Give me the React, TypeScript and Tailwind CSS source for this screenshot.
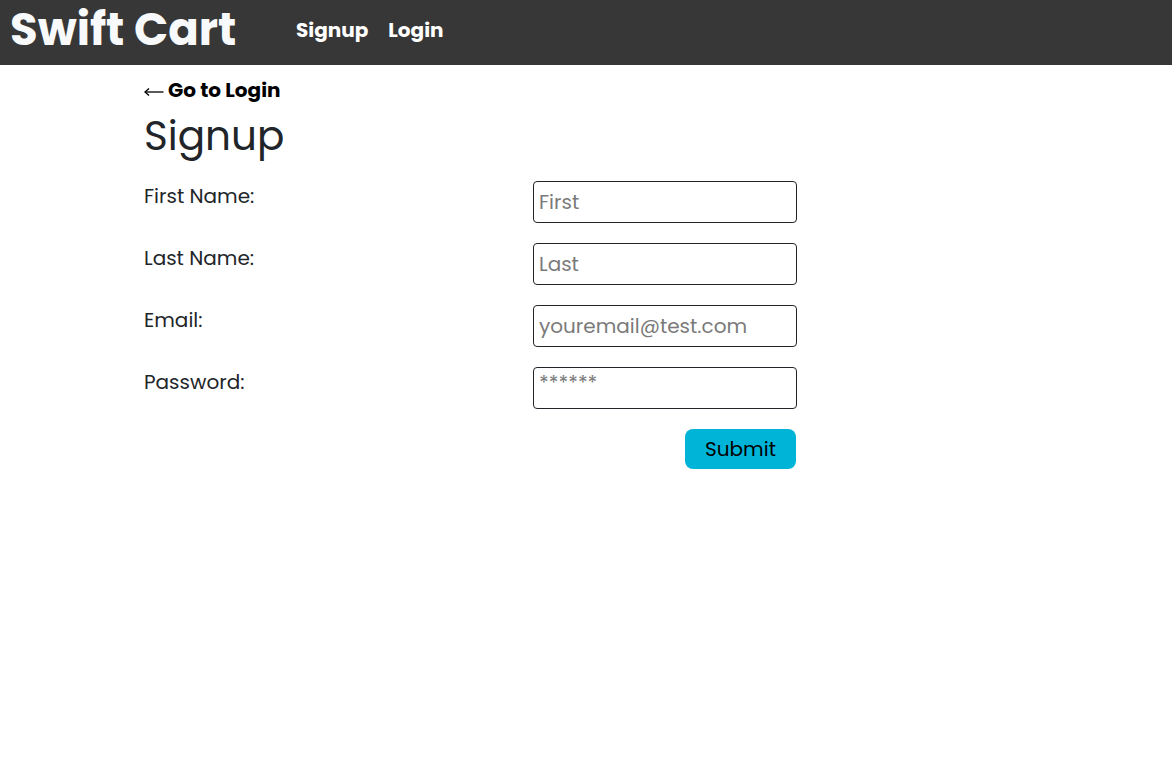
import React from "react";

export default function App() {
  const font = { fontFamily: '"Poppins", "Inter", "Noto Sans", sans-serif' };
  const fields = [
    { label: "First Name:", ph: "First", type: "text" },
    { label: "Last Name:", ph: "Last", type: "text" },
    { label: "Email:", ph: "youremail@test.com", type: "email" },
    { label: "Password:", ph: "******", type: "text" },
  ];
  return (
    <div className="min-h-[776px] bg-white text-[#212529]" style={font}>
      <header className="h-[65px] bg-[#373737] flex items-center pb-[6px]">
        <div className="pl-[10px] text-[45px] font-bold text-[#f8f9fa] leading-none w-[296px]">Swift Cart</div>
        <nav className="flex gap-[20px] text-[20px] font-bold text-white">
          <a>Signup</a>
          <a>Login</a>
        </nav>
      </header>
      <main className="pl-[144px] w-[797px]">
        <div className="mt-[13px] text-[20px] font-bold text-black leading-[24px] flex items-center">
          <svg width="20" height="10" viewBox="0 0 20 10" className="mr-[4px] mt-[3px]" fill="none" stroke="black" strokeWidth="1.3">
            <path d="M1 5 H19.5" />
            <path d="M5 1.5 L1 5 L5 8.5" />
          </svg>
          Go to Login
        </div>
        <h1 className="mt-[10px] text-[40.5px] leading-[48px] font-normal">Signup</h1>
        <form className="mt-[21px] flex flex-col gap-[20px]">
          {fields.map((f) => (
            <div key={f.label} className="flex justify-between items-start">
              <label className="text-[20px] leading-[28px] pt-[1px]">{f.label}</label>
              <input
                type={f.type}
                placeholder={f.ph}
                className={`w-[264px] h-[42px] border border-[#212529] rounded-[4px] px-[5px] text-[20px] placeholder-[#7a7a7a] outline-none ${f.label === "Password:" ? "pb-[10px]" : ""}`}
              />
            </div>
          ))}
          <div className="flex justify-end">
            <button type="button" className="w-[111px] h-[40px] mr-[1px] bg-[#00b4d8] rounded-[8px] text-[20px] text-black">
              Submit
            </button>
          </div>
        </form>
      </main>
    </div>
  );
}
